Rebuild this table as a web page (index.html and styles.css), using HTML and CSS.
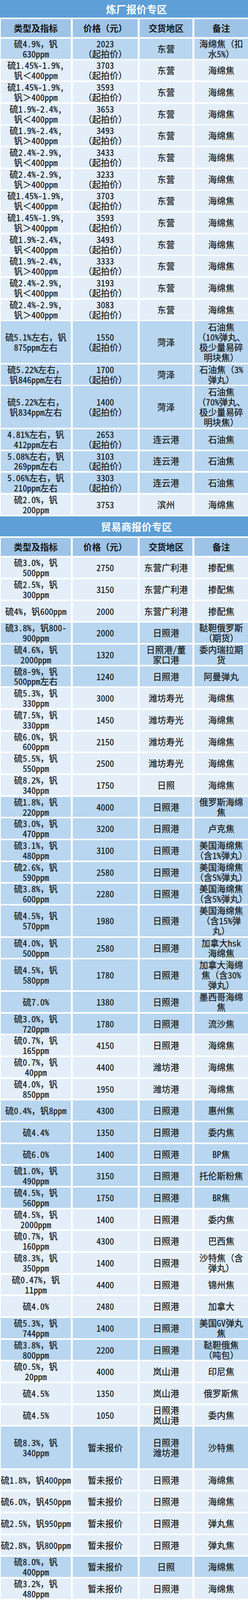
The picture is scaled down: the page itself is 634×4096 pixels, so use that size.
FILE: index.html
```html
<!DOCTYPE html>
<html lang="zh">
<head>
<meta charset="utf-8">
<title>报价专区</title>
<link rel="stylesheet" href="styles.css">
</head>
<body>
<div class="sheet">
  <div class="title t1">炼厂报价专区</div>
  <div class="row hd"><div>类型及指标</div><div>价格（元）</div><div>交货地区</div><div>备注</div></div>
  <div class="row md"><div>硫4.9%，钒<br>630ppm</div><div>2023<br>（起拍价）</div><div>东营</div><div>海绵焦（扣<br>水5%）</div></div>
  <div class="row lt"><div>硫1.45%-1.9%,<br>钒＜400ppm</div><div>3703<br>（起拍价）</div><div>东营</div><div>海绵焦</div></div>
  <div class="row lt"><div>硫1.45%-1.9%,<br>钒＞400ppm</div><div>3593<br>（起拍价）</div><div>东营</div><div>海绵焦</div></div>
  <div class="row lt"><div>硫1.9%-2.4%,<br>钒＜400ppm</div><div>3653<br>（起拍价）</div><div>东营</div><div>海绵焦</div></div>
  <div class="row lt"><div>硫1.9%-2.4%,<br>钒＞400ppm</div><div>3493<br>（起拍价）</div><div>东营</div><div>海绵焦</div></div>
  <div class="row lt"><div>硫2.4%-2.9%,<br>钒＜400ppm</div><div>3433<br>（起拍价）</div><div>东营</div><div>海绵焦</div></div>
  <div class="row lt"><div>硫2.4%-2.9%,<br>钒＞400ppm</div><div>3233<br>（起拍价）</div><div>东营</div><div>海绵焦</div></div>
  <div class="row lt"><div>硫1.45%-1.9%,<br>钒＜400ppm</div><div>3703<br>（起拍价）</div><div>东营</div><div>海绵焦</div></div>
  <div class="row lt"><div>硫1.45%-1.9%,<br>钒＞400ppm</div><div>3593<br>（起拍价）</div><div>东营</div><div>海绵焦</div></div>
  <div class="row lt"><div>硫1.9%-2.4%,<br>钒＜400ppm</div><div>3493<br>（起拍价）</div><div>东营</div><div>海绵焦</div></div>
  <div class="row lt"><div>硫1.9%-2.4%,<br>钒＞400ppm</div><div>3333<br>（起拍价）</div><div>东营</div><div>海绵焦</div></div>
  <div class="row lt"><div>硫2.4%-2.9%,<br>钒＜400ppm</div><div>3193<br>（起拍价）</div><div>东营</div><div>海绵焦</div></div>
  <div class="row lt"><div>硫2.4%-2.9%,<br>钒＞400ppm</div><div>3083<br>（起拍价）</div><div>东营</div><div>海绵焦</div></div>
  <div class="row md h4"><div>硫5.1%左右，钒<br>875ppm左右</div><div>1550<br>（起拍价）</div><div>菏泽</div><div>石油焦<br>（10%弹丸、<br>极少量易碎<br>明块焦）</div></div>
  <div class="row md"><div>硫5.22%左右，<br>钒846ppm左右</div><div>1700<br>（起拍价）</div><div>菏泽</div><div>石油焦（3%<br>弹丸）</div></div>
  <div class="row md h4"><div>硫5.22%左右，<br>钒834ppm左右</div><div>1400<br>（起拍价）</div><div>菏泽</div><div>石油焦<br>（70%弹丸、<br>极少量易碎<br>明块焦）</div></div>
  <div class="row md"><div>4.81%左右，钒<br>412ppm左右</div><div>2653<br>（起拍价）</div><div>连云港</div><div>石油焦</div></div>
  <div class="row md"><div>5.08%左右，钒<br>269ppm左右</div><div>3103<br>（起拍价）</div><div>连云港</div><div>石油焦</div></div>
  <div class="row md"><div>5.06%左右，钒<br>210ppm左右</div><div>3303<br>（起拍价）</div><div>连云港</div><div>石油焦</div></div>
  <div class="row lt"><div>硫2.0%，钒<br>200ppm</div><div>3753</div><div>滨州</div><div>海绵焦</div></div>

  <div class="title t2">贸易商报价专区</div>
  <div class="row hd"><div>类型及指标</div><div>价格（元）</div><div>交货地区</div><div>备注</div></div>
  <div class="row lt"><div>硫3.0%，钒<br>500ppm</div><div>2750</div><div>东营广利港</div><div>掺配焦</div></div>
  <div class="row lt"><div>硫2.5%，钒<br>300ppm</div><div>3150</div><div>东营广利港</div><div>掺配焦</div></div>
  <div class="row lt"><div>硫4%，钒600ppm</div><div>2000</div><div>东营广利港</div><div>掺配焦</div></div>
  <div class="row md"><div>硫3.8%，钒800-<br>900ppm</div><div>2000</div><div>日照港</div><div>鞑靼俄罗斯<br>（期货）</div></div>
  <div class="row md"><div>硫4.6%，钒<br>2000ppm</div><div>1320</div><div>日照港/董<br>家口港</div><div>委内瑞拉期<br>货</div></div>
  <div class="row md"><div>硫8-9%，钒<br>500ppm左右</div><div>1240</div><div>日照港</div><div>阿曼弹丸</div></div>
  <div class="row lt"><div>硫5.3%，钒<br>330ppm</div><div>3000</div><div>潍坊寿光</div><div>海绵焦</div></div>
  <div class="row lt"><div>硫7.5%，钒<br>330ppm</div><div>1450</div><div>潍坊寿光</div><div>海绵焦</div></div>
  <div class="row lt"><div>硫6.0%，钒<br>600ppm</div><div>2150</div><div>潍坊寿光</div><div>海绵焦</div></div>
  <div class="row lt"><div>硫5.5%，钒<br>550ppm</div><div>2500</div><div>潍坊寿光</div><div>海绵焦</div></div>
  <div class="row lt"><div>硫8.2%，钒<br>340ppm</div><div>1750</div><div>日照</div><div>海绵焦</div></div>
  <div class="row md"><div>硫1.8%，钒<br>220ppm</div><div>4000</div><div>日照港</div><div>俄罗斯海绵<br>焦</div></div>
  <div class="row md"><div>硫3.0%，钒<br>470ppm</div><div>3200</div><div>日照港</div><div>卢克焦</div></div>
  <div class="row md"><div>硫3.1%，钒<br>480ppm</div><div>3100</div><div>日照港</div><div>美国海绵焦<br>（含1%弹丸）</div></div>
  <div class="row md"><div>硫2.6%，钒<br>590ppm</div><div>2580</div><div>日照港</div><div>美国海绵焦<br>（含5%弹丸）</div></div>
  <div class="row md"><div>硫3.8%，钒<br>600ppm</div><div>2280</div><div>日照港</div><div>美国海绵焦<br>（含5%弹丸）</div></div>
  <div class="row md h3"><div>硫4.5%，钒<br>570ppm</div><div>1980</div><div>日照港</div><div>美国海绵焦<br>（含15%弹<br>丸）</div></div>
  <div class="row md"><div>硫4.0%，钒<br>500ppm</div><div>2580</div><div>日照港</div><div>加拿大hsk<br>海绵焦</div></div>
  <div class="row md h3"><div>硫4.5%，钒<br>580ppm</div><div>1780</div><div>日照港</div><div>加拿大海绵<br>焦（含30%<br>弹丸）</div></div>
  <div class="row md"><div>硫7.0%</div><div>1380</div><div>日照港</div><div>墨西哥海绵<br>焦</div></div>
  <div class="row md"><div>硫3.0%，钒<br>720ppm</div><div>1780</div><div>日照港</div><div>流沙焦</div></div>
  <div class="row lt"><div>硫0.7%，钒<br>165ppm</div><div>4150</div><div>日照港</div><div>海绵焦</div></div>
  <div class="row lt"><div>硫0.7%，钒<br>40ppm</div><div>4400</div><div>潍坊港</div><div>海绵焦</div></div>
  <div class="row lt"><div>硫4.0%，钒<br>850ppm</div><div>1950</div><div>潍坊港</div><div>海绵焦</div></div>
  <div class="row md"><div>硫0.4%，钒8ppm</div><div>4300</div><div>日照港</div><div>惠州焦</div></div>
  <div class="row md"><div>硫4.4%</div><div>1350</div><div>日照港</div><div>委内焦</div></div>
  <div class="row md"><div>硫6.0%</div><div>1400</div><div>日照港</div><div>BP焦</div></div>
  <div class="row md"><div>硫1.0%，钒<br>490ppm</div><div>3150</div><div>日照港</div><div>托伦斯粉焦</div></div>
  <div class="row md"><div>硫4.5%，钒<br>560ppm</div><div>1750</div><div>日照港</div><div>BR焦</div></div>
  <div class="row lt"><div>硫4.5%，钒<br>2000ppm</div><div>1400</div><div>日照港</div><div>委内焦</div></div>
  <div class="row lt"><div>硫0.7%，钒<br>160ppm</div><div>4300</div><div>日照港</div><div>巴西焦</div></div>
  <div class="row lt"><div>硫8.3%，钒<br>350ppm</div><div>1400</div><div>日照港</div><div>沙特焦（含<br>弹丸）</div></div>
  <div class="row lt"><div>硫0.47%，钒<br>11ppm</div><div>4400</div><div>日照港</div><div>锦州焦</div></div>
  <div class="row lt"><div>硫4.0%</div><div>2480</div><div>日照港</div><div>加拿大</div></div>
  <div class="row md"><div>硫5.3%，钒<br>744ppm</div><div>1400</div><div>日照港</div><div>美国GV弹丸<br>焦</div></div>
  <div class="row md"><div>硫3.8%，钒<br>800ppm</div><div>2200</div><div>日照港</div><div>鞑靼俄焦<br>（吨包）</div></div>
  <div class="row lt"><div>硫0.5%，钒<br>20ppm</div><div>4000</div><div>岚山港</div><div>印尼焦</div></div>
  <div class="row lt"><div>硫4.5%</div><div>1350</div><div>岚山港</div><div>俄罗斯焦</div></div>
  <div class="row lt"><div>硫4.5%</div><div>1050</div><div>日照港<br>岚山港</div><div>委内焦</div></div>
  <div class="row md h4"><div>硫8.3%，钒<br>340ppm</div><div>暂未报价</div><div>日照港<br>潍坊港</div><div>沙特焦</div></div>
  <div class="row lt"><div>硫1.8%，钒400ppm</div><div>暂未报价</div><div>日照港</div><div>海绵焦</div></div>
  <div class="row lt"><div>硫6.0%，钒450ppm</div><div>暂未报价</div><div>日照港</div><div>海绵焦</div></div>
  <div class="row lt"><div>硫2.5%，钒950ppm</div><div>暂未报价</div><div>日照港</div><div>弹丸焦</div></div>
  <div class="row lt"><div>硫2.8%，钒800ppm</div><div>暂未报价</div><div>日照港</div><div>弹丸焦</div></div>
  <div class="row md"><div>硫8.0%，钒<br>400ppm</div><div>暂未报价</div><div>日照</div><div>海绵焦</div></div>
  <div class="row lt"><div>硫3.2%，钒<br>480ppm</div><div>暂未报价</div><div>日照港</div><div>海绵焦</div></div>
</div>
</body>
</html>
```

FILE: styles.css
```css
html, body {
  margin: 0;
  padding: 0;
  background: #ffffff;
}

body {
  font-family: "Noto Sans Mono CJK SC", "Noto Sans CJK SC", "DejaVu Sans", sans-serif;
  color: #161616;
  width: 634px;
  overflow: hidden;
}

.sheet {
  display: flex;
  flex-direction: column;
  gap: 3.87px;
}

.title {
  display: flex;
  align-items: center;
  justify-content: center;
  padding-left: 64px;
  background: #5d9fd6;
  color: #ffffff;
  font-family: "Noto Sans CJK SC", sans-serif;
  font-weight: 700;
  font-size: 26px;
}

.t1 {
  height: 44.8px;
}

.t2 {
  height: 51.8px;
}

.row {
  display: grid;
  grid-template-columns: 179px 166px 135px 137px;
  column-gap: 5px;
  margin-left: 2px;
  min-height: 51.8px;
  font-size: 22.4px;
  line-height: 25.9px;
  -webkit-text-stroke: 0.3px #161616;
}

.row > div {
  display: flex;
  align-items: center;
  justify-content: center;
  text-align: center;
  white-space: nowrap;
}

.hd {
  min-height: 46.2px;
  font-weight: 700;
  -webkit-text-stroke: 0;
}

.hd > div {
  background: #9dc4e7;
}

.md > div {
  background: #b8d6ef;
}

.lt > div {
  background: #e3eef8;
}

.h3 {
  min-height: 78.8px;
}

.h4 {
  min-height: 106.5px;
}
```
